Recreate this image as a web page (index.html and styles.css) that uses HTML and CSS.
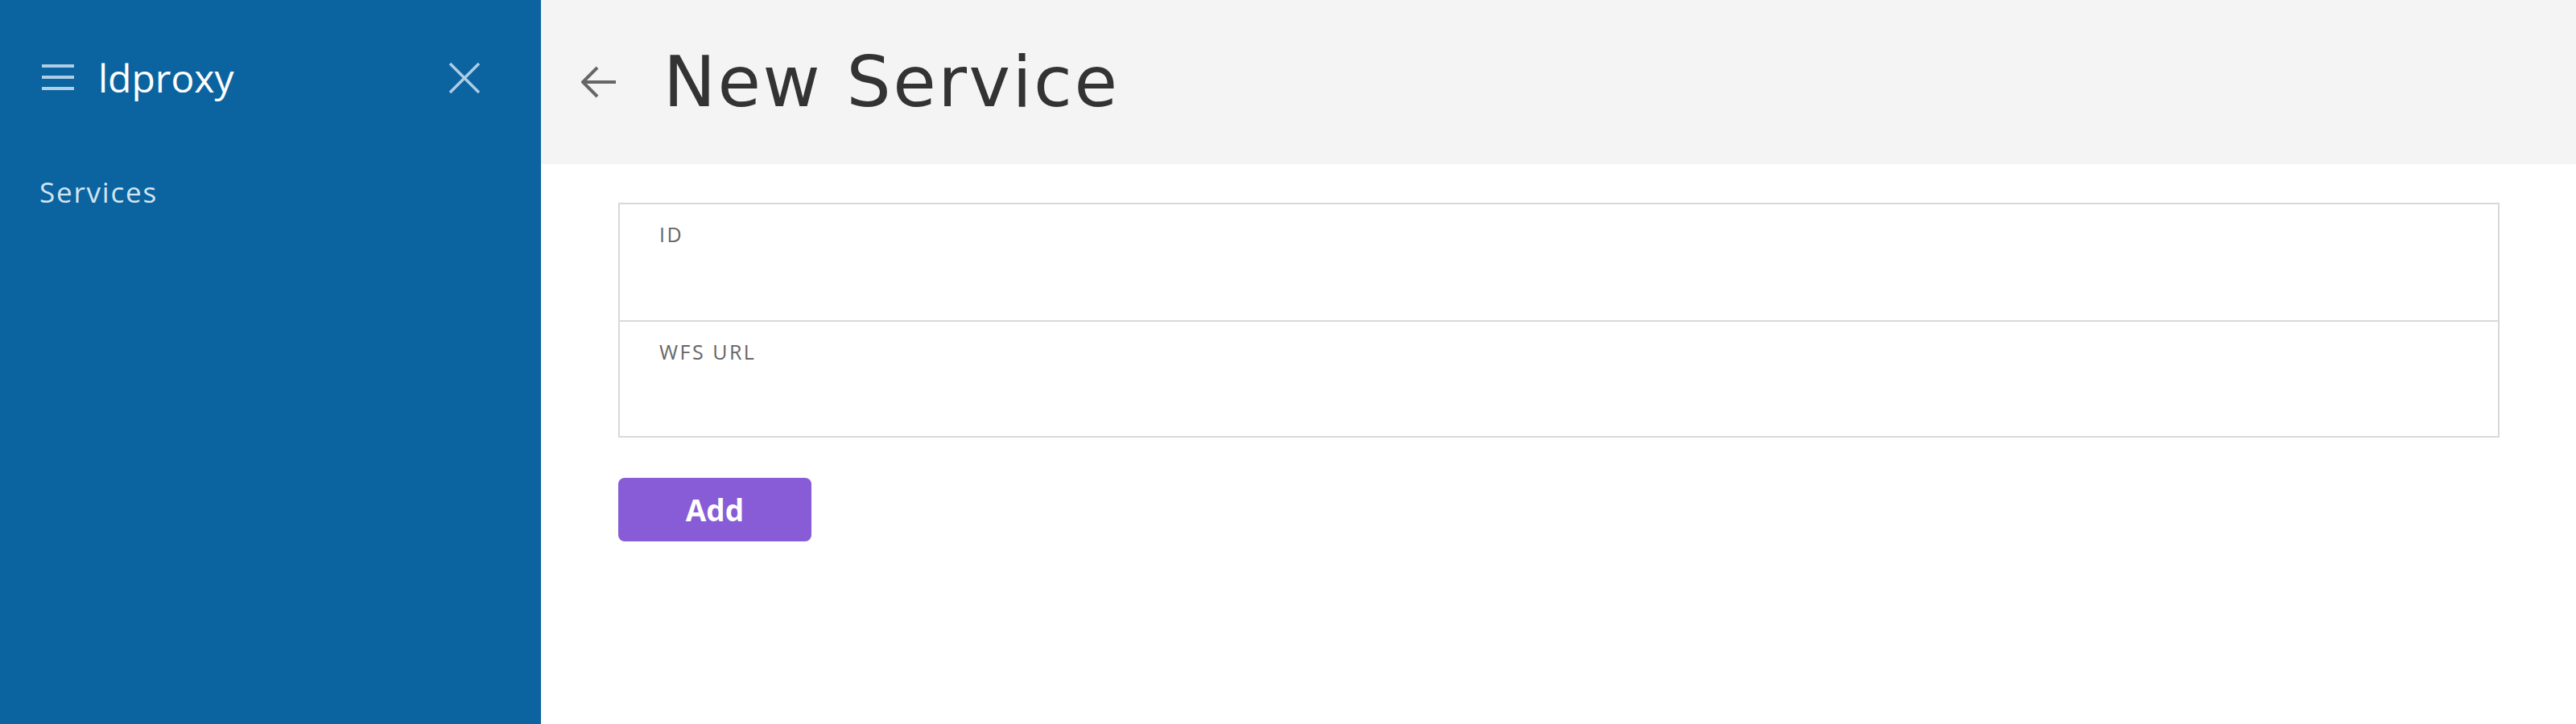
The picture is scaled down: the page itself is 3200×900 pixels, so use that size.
FILE: index.html
```html
<!DOCTYPE html>
<html lang="en">
<head>
<meta charset="utf-8">
<title>ldproxy - New Service</title>
<link rel="stylesheet" href="styles.css">
</head>
<body>
<div class="app">
  <aside class="sidebar">
    <div class="sidebar-head">
      <svg class="menu-icon" width="40" height="34" viewBox="0 0 40 34" aria-hidden="true">
        <rect x="0" y="0" width="40" height="4"/>
        <rect x="0" y="14" width="40" height="4"/>
        <rect x="0" y="28" width="40" height="4"/>
      </svg>
      <span class="brand">ldproxy</span>
      <svg class="close-icon" width="40" height="40" viewBox="0 0 40 40" aria-hidden="true">
        <path d="M2 2 L38 38 M38 2 L2 38"/>
      </svg>
    </div>
    <nav class="nav">
      <a class="nav-item">Services</a>
    </nav>
  </aside>
  <main class="main">
    <header class="page-head">
      <svg class="back-icon" width="44" height="40" viewBox="0 0 44 40" aria-hidden="true">
        <path d="M20 2 L2 20 L20 38 M2 20 L43 20"/>
      </svg>
      <h1 class="title">New Service</h1>
    </header>
    <section class="content">
      <div class="form-box">
        <div class="field"><label class="field-label">ID</label></div>
        <div class="field"><label class="field-label">WFS URL</label></div>
      </div>
      <button class="btn-add">Add</button>
    </section>
  </main>
</div>
</body>
</html>
```
FILE: styles.css
```css
html, body {
  margin: 0;
  padding: 0;
  height: 100%;
}
body {
  font-family: "Open Sans", "Liberation Sans", sans-serif;
  background: #ffffff;
}
.app {
  display: flex;
  min-height: 900px;
}
.sidebar {
  width: 672px;
  flex: none;
  background: #0b64a0;
  color: #ffffff;
}
.sidebar-head {
  display: flex;
  align-items: flex-start;
  height: 192px;
  padding: 77px 75px 0 52px;
  box-sizing: border-box;
}
.menu-icon {
  fill: #aecde6;
  margin-top: 3px;
  flex: none;
}
.brand {
  font-family: "Open Sans", sans-serif;
  font-size: 48px;
  line-height: 40px;
  margin-left: 30px;
  flex: 1;
}
.close-icon {
  stroke: #aecde6;
  stroke-width: 3.5;
  fill: none;
  flex: none;
}
.nav {
  padding: 22px 0 0 49px;
}
.nav-item {
  display: block;
  font-size: 35px;
  line-height: 50px;
  letter-spacing: 1.8px;
  color: #d4e4f1;
}
.main {
  flex: 1;
  display: flex;
  flex-direction: column;
}
.page-head {
  height: 204px;
  background: #f4f4f4;
  display: flex;
  align-items: center;
  padding-left: 50px;
  box-sizing: border-box;
}
.back-icon {
  stroke: #666666;
  stroke-width: 4;
  fill: none;
  flex: none;
}
.title {
  margin: 0 0 0 58px;
  font-family: "DejaVu Sans", sans-serif;
  font-weight: 400;
  font-size: 87px;
  line-height: 100px;
  letter-spacing: 2.5px;
  color: #333333;
}
.content {
  padding: 48px 95px 0 96px;
}
.form-box {
  border: 2px solid #d9d9d9;
}
.field {
  height: 144px;
  box-sizing: border-box;
  padding: 22px 0 0 49px;
}
.field + .field {
  border-top: 2px solid #d9d9d9;
}
.field-label {
  font-size: 25px;
  line-height: 30px;
  color: #666666;
  letter-spacing: 2.5px;
}
.btn-add {
  margin-top: 50px;
  width: 240px;
  height: 79px;
  border: none;
  border-radius: 8px;
  background: #875cd6;
  color: #ffffff;
  font-family: "Open Sans", sans-serif;
  font-weight: 700;
  font-size: 37px;
  padding: 0;
}
```
